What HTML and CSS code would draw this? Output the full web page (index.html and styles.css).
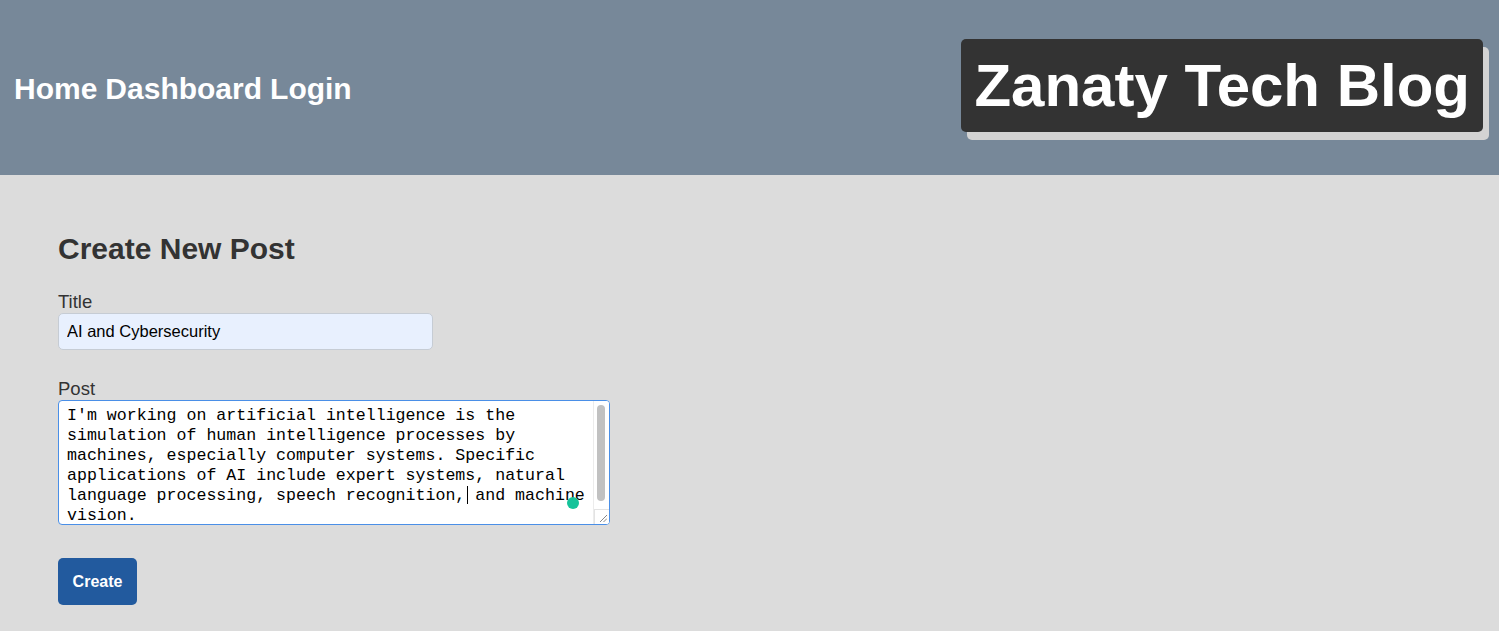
FILE: index.html
```html
<!DOCTYPE html>
<html lang="en">
<head>
<meta charset="utf-8">
<title>Zanaty Tech Blog</title>
<link rel="stylesheet" href="styles.css">
</head>
<body>
<header class="site-header">
  <nav class="nav">
    <a class="nav-link" href="#">Home</a>
    <a class="nav-link" href="#">Dashboard</a>
    <a class="nav-link" href="#">Login</a>
  </nav>
  <h1 class="brand">Zanaty Tech Blog</h1>
</header>
<main class="main">
  <h2 class="page-title">Create New Post</h2>
  <form class="post-form">
    <label class="field-label" for="title">Title</label>
    <input class="title-input" id="title" type="text" value="AI and Cybersecurity">
    <label class="field-label post-label" for="post">Post</label>
    <div class="textarea-wrap">
      <textarea class="post-input" id="post">I'm working on artificial intelligence is the simulation of human intelligence processes by machines, especially computer systems. Specific applications of AI include expert systems, natural language processing, speech recognition, and machine vision.</textarea>
      <span class="scroll-track"><span class="scroll-thumb"></span></span>
      <span class="resize-corner">
        <svg width="8" height="8" viewBox="0 0 8 8"><path d="M1 8 L8 1 M4.5 8 L8 4.5" stroke="#888" stroke-width="1"/></svg>
      </span>
      <span class="caret"></span>
      <span class="assist-dot"></span>
    </div>
    <button class="create-btn" type="button">Create</button>
  </form>
</main>
</body>
</html>
```
FILE: styles.css
```css
html, body {
  margin: 0;
  padding: 0;
}
body {
  background: #dcdcdc;
  font-family: "Liberation Sans", Arial, Helvetica, sans-serif;
  color: #333;
  min-height: 631px;
}
.site-header {
  height: 175px;
  background: #778899;
  display: flex;
  align-items: center;
  justify-content: space-between;
  padding: 0 16px 0 14px;
  box-sizing: border-box;
}
.nav {
  display: flex;
  gap: 8px;
  margin-top: 2px;
}
.nav-link {
  color: #fff;
  text-decoration: none;
  font-weight: bold;
  font-size: 30px;
}
.brand {
  margin: 0;
  background: #333;
  color: #fff;
  font-size: 60px;
  font-weight: bold;
  line-height: 69px;
  padding: 12px 13px;
  border-radius: 5px;
  box-shadow: 6px 8px 0 #d3d3d3;
  margin-bottom: 4px;
}
.main {
  padding: 57px 58px 0;
}
.page-title {
  margin: 0;
  font-size: 30px;
  font-weight: bold;
  color: #333;
  line-height: 34px;
}
.post-form {
  display: flex;
  flex-direction: column;
  align-items: flex-start;
  margin-top: 25px;
}
.field-label {
  font-size: 18.5px;
  line-height: 22px;
  color: #333;
}
.post-label {
  margin-top: 28px;
}
.title-input {
  width: 375px;
  height: 37px;
  box-sizing: border-box;
  background: #e8f0fe;
  border: 1px solid #c6ccd4;
  border-radius: 5px;
  padding: 0 8px;
  font-family: "Liberation Sans", Arial, sans-serif;
  font-size: 16.5px;
  color: #000;
  outline: none;
}
.textarea-wrap {
  position: relative;
}
.post-input {
  display: block;
  width: 552px;
  height: 125px;
  box-sizing: border-box;
  border: 1px solid #4a8fe7;
  border-radius: 4px;
  padding: 5px 22px 0 8px;
  font-family: "Liberation Mono", "Courier New", monospace;
  font-size: 16.6px;
  line-height: 20px;
  color: #000;
  background: #fff;
  outline: none;
  resize: none;
  overflow: hidden;
  scrollbar-width: none;
}
.scroll-track {
  position: absolute;
  top: 1px;
  right: 1px;
  bottom: 1px;
  width: 15px;
  border-left: 1px solid #ececec;
  background: #fff;
  border-radius: 0 3px 3px 0;
}
.scroll-thumb {
  position: absolute;
  left: 3px;
  top: 4px;
  width: 8px;
  height: 96px;
  border-radius: 4px;
  background: #c1c1c1;
}
.resize-corner {
  position: absolute;
  right: 1px;
  bottom: 1px;
  width: 15px;
  height: 15px;
  box-sizing: border-box;
  border-left: 1px solid #e3e3e3;
  border-top: 1px solid #e3e3e3;
  background: #fff;
  display: flex;
  align-items: flex-end;
  justify-content: flex-end;
  padding: 0 2px 2px 0;
  border-radius: 0 0 3px 0;
}
.resize-corner svg {
  display: block;
}
.caret {
  position: absolute;
  left: 409px;
  top: 86px;
  width: 1px;
  height: 18px;
  background: #000;
}
.assist-dot {
  position: absolute;
  left: 509px;
  top: 97px;
  width: 12px;
  height: 12px;
  border-radius: 50%;
  background: #15c39a;
}
.create-btn {
  margin-top: 33px;
  width: 79px;
  height: 47px;
  background: #225a9e;
  color: #fff;
  border: none;
  border-radius: 5px;
  font-family: "Liberation Sans", Arial, sans-serif;
  font-weight: bold;
  font-size: 16px;
  cursor: pointer;
}
```
